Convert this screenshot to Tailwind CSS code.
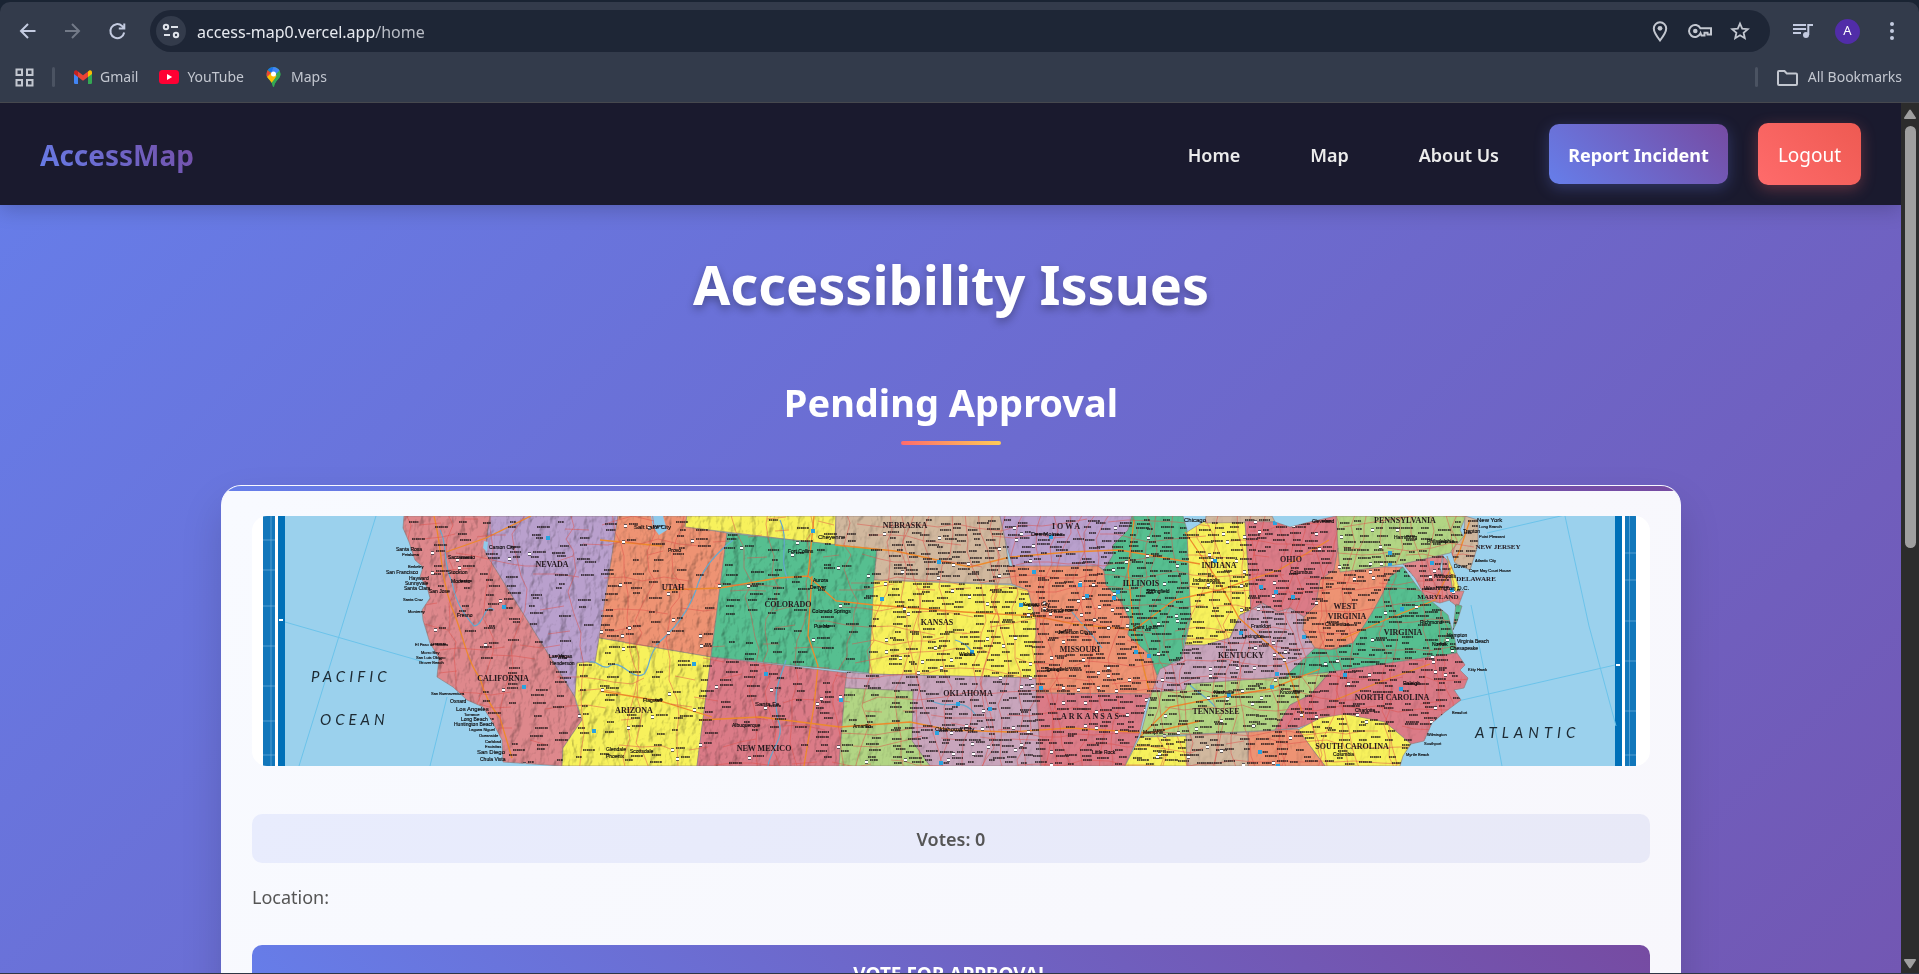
<!DOCTYPE html>
<html lang="en">
<head>
<meta charset="utf-8">
<title>AccessMap</title>
<script src="https://cdn.jsdelivr.net/npm/@tailwindcss/browser@4"></script>
</head>
<body class="flex h-screen flex-col overflow-hidden bg-[#1a2433] font-['Noto_Sans',sans-serif]">

<!-- Browser toolbar -->
<div class="mt-[2px] shrink-0 rounded-t-[10px] border-b border-[#46484e] bg-[#333b4b] text-[#c3c7d0]">
  <div class="flex h-[58px] items-center pl-4 pr-[15px]">
    <button aria-label="Back" class="flex size-6 items-center justify-center text-[#c4cbe0]">
      <svg class="size-6" viewBox="0 0 24 24" fill="none" stroke="currentColor" stroke-width="2"><path d="M19.5 12H6M12 5l-7 7 7 7"/></svg>
    </button>
    <button aria-label="Forward" class="ml-5 flex size-6 items-center justify-center text-[#737a88]">
      <svg class="size-6" viewBox="0 0 24 24" fill="none" stroke="currentColor" stroke-width="2"><path d="M5 12h14M12 5l7 7-7 7"/></svg>
    </button>
    <button aria-label="Reload" class="ml-[21px] flex size-6 items-center justify-center text-[#c4cbe0]">
      <svg class="size-6" viewBox="0 0 24 24" fill="none" stroke="currentColor" stroke-width="2"><path d="M19.200 13.500a7 7 0 1 1-2.200-6.600L19 9M19.300 4.500v5h-5.500"/></svg>
    </button>
    <div class="ml-[21px] flex h-[42px] flex-1 items-center rounded-full bg-[#1e2636] pl-[6px] pr-5">
      <button aria-label="Site information" class="flex size-[30px] items-center justify-center rounded-full bg-[#333b4b] text-[#dfe3ea]">
        <svg class="size-[18px]" viewBox="0 0 18 18" fill="none" stroke="currentColor" stroke-width="2"><circle cx="4" cy="5" r="2.200"/><path d="M9 5h7M2 13h6"/><circle cx="14" cy="13" r="2.200"/></svg>
      </button>
      <a href="#" class="ml-[11px] flex-1 pt-[2px] text-[16px] leading-6 text-[#b9bdc6]"><span class="text-[#e6e9ef]">access-map0.vercel.app</span>/home</a>
      <button aria-label="Location" class="flex w-5 justify-center">
        <svg class="h-[22px] w-5" viewBox="0 0 20 22" fill="none" stroke="currentColor" stroke-width="2"><path d="M10 20.500C6.500 16 3.800 12 3.800 8.500a6.200 6.200 0 0 1 12.400 0c0 3.500-2.700 7.500-6.200 12z"/><circle cx="10" cy="8.300" r="2.400" fill="currentColor" stroke="none"/></svg>
      </button>
      <button aria-label="Passwords" class="ml-[18px] flex">
        <svg class="h-[18px] w-6" viewBox="0 0 24 18" fill="none" stroke="currentColor" stroke-width="2"><path d="M12.400 6.300H23v6.200h-3.500V10.700h-3v2.800h-3l-.9-2.300a6 6 0 1 1-.2-4.900z"/><circle cx="7.300" cy="9" r="2.300" fill="currentColor" stroke="none"/></svg>
      </button>
      <button aria-label="Bookmark this tab" class="ml-[18px] flex">
        <svg class="size-5" viewBox="0 0 20 20" fill="none" stroke="currentColor" stroke-width="1.800"><path d="M10 2.500l2.200 5.100 5.600.5-4.200 3.700 1.200 5.400-4.800-2.900-4.800 2.900 1.200-5.400-4.200-3.700 5.600-.5z"/></svg>
      </button>
    </div>
    <button aria-label="Media controls" class="ml-[22px] flex text-[#c4cbe0]">
      <svg class="size-[22px]" viewBox="0 0 22 22" fill="none" stroke="currentColor" stroke-width="2"><path d="M1 5h13M1 9h13M1 13h8M21 5h-4.700v10"/><circle cx="14" cy="15" r="3" fill="currentColor" stroke="none"/></svg>
    </button>
    <button class="ml-[21px] flex size-[25px] items-center justify-center rounded-full bg-[#512da8] text-[13px] text-white">A</button>
    <button aria-label="Menu" class="ml-[20px] flex text-[#c4cbe0]">
      <svg class="size-6" viewBox="0 0 24 24" fill="currentColor"><circle cx="12" cy="5" r="2"/><circle cx="12" cy="12" r="2"/><circle cx="12" cy="19" r="2"/></svg>
    </button>
  </div>
  <div class="flex h-[42px] items-start pl-[15px] pr-[17px] text-[14px] leading-[34px]">
    <button aria-label="Apps" class="mt-2 flex">
      <svg class="size-[19px]" viewBox="0 0 19 19" fill="none" stroke="currentColor" stroke-width="2"><path d="M1.500 1.500h5.500v5.500H1.500zM12 1.500h5.500v5.500H12zM1.500 12h5.500v5.500H1.500zM12 12h5.500v5.500H12z"/></svg>
    </button>
    <span class="ml-[18px] mt-[7px] h-5 w-[3px] rounded bg-[#4b5362]"></span>
    <a href="#" class="ml-[19px] flex gap-2">
      <svg class="mt-[10px] h-[14px] w-[18px]" viewBox="0 0 18 14"><path fill="#4285f4" d="M0 3l4 3v8H1.200A1.200 1.200 0 0 1 0 12.800z"/><path fill="#34a853" d="M14 6l4-3v9.800a1.200 1.200 0 0 1-1.200 1.200H14z"/><path fill="#fbbc04" d="M14 1.500l1-.8c1.300-1 3 0 3 1.500V4l-4 3z"/><path fill="#c5221f" d="M0 2.200C0 .7 1.700-.3 3 .7l1 .8V7L0 4z"/><path fill="#ea4335" d="M4 1.500l5 3.800 5-3.800V7l-5 3.700L4 7z"/></svg>Gmail</a>
    <a href="#" class="ml-[21px] flex gap-2">
      <svg class="mt-[10px] h-[14px] w-5" viewBox="0 0 20 14"><rect width="20" height="14" rx="3.500" fill="#ff0033"/><path fill="#fff" d="M8 4l5.200 3L8 10z"/></svg>YouTube</a>
    <a href="#" class="ml-[22px] flex gap-[10px]">
      <svg class="mt-[7px] h-5 w-[15px]" viewBox="0 0 15 20"><defs><clipPath id="pin"><path d="M7.500 0A7 7 0 0 0 .5 7c0 3 1.700 4.500 3.500 6.600C5.800 15.700 6.300 17 6.700 19c.2 1.200 1.400 1.200 1.600 0 .4-2 .9-3.300 2.700-5.400C12.800 11.500 14.500 10 14.500 7a7 7 0 0 0-7-7z"/></clipPath></defs><g clip-path="url(#pin)"><path fill="#34a853" d="M0 0h15v20H0z"/><path fill="#fbbc04" d="M0 9l5-4 6 4-8 10-4-5z"/><path fill="#ea4335" d="M0 2l5 4-5 5z"/><path fill="#1a73e8" d="M1 1l8-2-3.500 7L2 3z"/><path fill="#4285f4" d="M8-1l6 4-6 6-3-3z"/><path fill="#34a853" d="M14 3l1 5-8 12-1-3z"/></g><circle cx="7.500" cy="7" r="2.500" fill="#fff"/></svg>Maps</a>
    <span class="ml-auto mt-[7px] h-5 w-[3px] rounded bg-[#4b5362]"></span>
    <button class="ml-[19px] flex gap-[10px]">
      <svg class="mt-[10px] h-4 w-[21px]" viewBox="0 0 21 16" fill="none" stroke="currentColor" stroke-width="2"><path d="M1 2a1 1 0 0 1 1-1h5.500l2.300 2.500H19a1 1 0 0 1 1 1V14a1 1 0 0 1-1 1H2a1 1 0 0 1-1-1z"/></svg>All Bookmarks</button>
  </div>
</div>

<div class="flex min-h-0 flex-1 border-b border-[#2e3644]">
  <div class="min-w-0 flex-1 overflow-hidden">
    <div class="flex min-h-[198%] flex-col bg-[linear-gradient(135deg,#667eea_0%,#764ba2_100%)]">

      <header class="relative flex h-[102px] shrink-0 items-center justify-between bg-[#1a1a2e] px-10 shadow-[0_4px_20px_rgba(0,0,0,0.2)]">
        <a href="#" class="bg-[linear-gradient(45deg,#667eea,#764ba2)] bg-clip-text pt-[2px] text-[28px] font-bold text-transparent">AccessMap</a>
        <nav class="flex items-center gap-[30px] text-[18px] font-semibold text-[#ebebeb]">
          <a href="#" class="px-5 pt-[2px]">Home</a>
          <a href="#" class="px-5 pt-[2px]">Map</a>
          <a href="#" class="px-5 pt-[2px]">About Us</a>
          <a href="#" class="flex h-[60px] w-[179px] items-center justify-center whitespace-nowrap rounded-[10px] bg-[linear-gradient(45deg,#667eea,#764ba2)] pt-[2px] text-[18px] font-bold text-white shadow-[0_4px_15px_rgba(102,126,234,0.3)]">Report Incident</a>
          <button class="h-[62px] w-[103px] rounded-[10px] bg-[linear-gradient(45deg,#ff6b6b,#ee5a52)] pt-[2px] text-[19px] font-normal text-white shadow-[0_4px_15px_rgba(255,107,107,0.3)]">Logout</button>
        </nav>
      </header>

      <main class="pl-[221px] pr-[220px] pt-[41px]">
        <h1 class="text-center text-[54px] leading-[76px] font-bold text-white [text-shadow:0_4px_8px_rgba(0,0,0,0.3)]">Accessibility Issues</h1>
        <h2 class="mt-[52px] text-center text-[38px] leading-[56px] font-bold text-white">Pending Approval</h2>
        <div class="mx-auto mt-[11px] h-1 w-[100px] rounded-sm bg-[linear-gradient(90deg,#ff6b6b,#feca57)]"></div>

        <article class="mt-10 overflow-hidden rounded-[20px] border border-[#f8f9ff] bg-[linear-gradient(135deg,#f8faff,#f8f7fc)] shadow-[0_20px_40px_rgba(0,0,0,0.15)]">
          <div class="h-[5px] bg-[linear-gradient(90deg,#667eea,#764ba2)]"></div>
          <div class="px-[30px] pb-[30px] pt-[25px]">
            <svg id="map" role="img" aria-label="Map of the United States" class="h-[250px] w-full rounded-[15px] bg-white" viewBox="252 516 1398 250" preserveAspectRatio="xMidYMid slice">
              <defs>
                <clipPath id="land"></clipPath>
                <filter id="relief" x="0" y="0" width="1" height="1" color-interpolation-filters="sRGB">
                  <feTurbulence type="fractalNoise" baseFrequency="0.11 0.07" numOctaves="4" seed="4"/>
                  <feDiffuseLighting surfaceScale="2" diffuseConstant="1.150" lighting-color="#fff"><feDistantLight azimuth="215" elevation="60"/></feDiffuseLighting>
                </filter>
                <linearGradient id="fade"><stop offset="0" stop-color="#fff"/><stop offset=".37" stop-color="#fff"/><stop offset=".5" stop-color="#555"/><stop offset="1" stop-color="#555"/></linearGradient>
                <mask id="west" maskUnits="userSpaceOnUse" x="400" y="516" width="1090" height="250"><rect x="400" y="516" width="1090" height="250" fill="url(#fade)"/></mask>
              </defs>
              <path fill="#1277bb" d="M263 516h12v250h-12zM1625 516h11v250h-11z"/>
              <path stroke="#7fb9e0" stroke-width=".6" fill="none" d="M271 516v250M1629.500 516v250M263 540h12m-12 30h12m-12 36h12m-12 40h12m-12 40h12m-12 35h12m-12 34h12M1625 553h11m-11 27h11m-11 41h11m-11 40h11m-11 50h11m-11 44h11"/>
              <path fill="#0070b8" d="M278 516h7v250h-7zM1615 516h7v250h-7z"/>
              <path fill="#9bd1ed" d="M285 516h1330v250H285z"/>
              <path stroke="#6cc3ea" stroke-width="1" fill="none" d="M376 516L299 766M285 622L424 662M447 697L430 766M1565 516l24 110 27 100M1487 533l78-18M1471 605l16 80 15 81M1458 701l157-36"/>
              <path fill="#fff" d="M279 619h4v2h-4zM1616 664h4v2h-4z"/>
              <g id="states"></g>
              <g clip-path="url(#land)" class="opacity-75 mix-blend-multiply">
                <g mask="url(#west)"><rect x="400" y="516" width="1090" height="250" filter="url(#relief)"/></g>
              </g>
              <g clip-path="url(#land)">
                <g fill="none" stroke="#64a9cf" stroke-width="1.200"><path d="M733 540c-18 14-32 30-37 50-8 22-22 40-40 55M656 647c-8 10-6 20-12 27-12 8-24-18-36-7-8 2-12-8-18-5M780 520c10 20-2 40 8 60M786 660c-6 20-14 30-8 60 8 18-8 30-10 46M930 700c20 12 30-5 45 14M1072 612c12 15 22 24 30 36M1190 685c10 10 20 14 25 22M955 640c14 4 12 8 18 12M440 530c8 14 2 32 12 52 4 22 12 32 22 44 10 0 10-24 20-16"/></g>
                <path fill="#8fc9ea" d="M651 516h12l4 14-8 5-6-8zM484 541l4 1-1 10-4-4z"/>
                <g fill="none" stroke="#ed8a2c" stroke-width="1.300"><path d="M434 516c8 30 6 60 18 92 10 22 14 52 28 70 4 16 10 28 20 40l12 40M446 552l40-14 45-22M600 691l60 10 52 16M720 588l58-10 30-2 28 25 38 4 90 7 70 4M808 576l6-60M812 576l-4 60 10 30-4 40-10 60M600 540l62 6M665 590l55-2M700 720l60-3 80 10 70-5 40 8 60 2 60-4 80 5 50-12M835 545l60 6 75 16 40-10 60-5 50-2 80 14M1024 614l50 10 60 6 40-30 45-10 60-20 50-30M1219 582l-34-50M1219 582l20 36 45 40 20 60M1140 737l30-30 40-8 60-10 50-20M1134 520l-6 50 6 60 15 60M1335 700l50-20 45-16M1340 640l45-20 50-20 25-50 10-30"/></g>
                <g id="roads" fill="none"></g>
                <g id="marks"></g>
              </g>
              <g id="cities" class="font-['Liberation_Sans',sans-serif]" fill="#0c0a0b" stroke="#0c0a0b" stroke-width=".15"></g>
              <g id="names" class="font-['Liberation_Serif',serif] font-bold" fill="#24181d" text-anchor="middle"></g>
              <g class="font-['Lato',sans-serif] text-[15px] italic" fill="#1d2a33">
                <text x="311" y="682" class="tracking-[4px]">PACIFIC</text><text x="320" y="725" class="tracking-[4px]">OCEAN</text><text x="1475" y="738" class="tracking-[5px]">ATLANTIC</text>
              </g>
            </svg>
            <p class="mt-12 flex h-[49px] items-center justify-center rounded-[10px] bg-[linear-gradient(135deg,#e8ecfd,#e8e9f7)] pt-[2px] text-[18px] font-semibold text-[#555]">Votes: 0</p>
            <p class="mt-5 text-[18px] leading-7 text-[#555]">Location:</p>
            <button class="mt-[34px] h-[58px] w-full rounded-[10px] bg-[linear-gradient(45deg,#667eea,#764ba2)] text-[19px] font-bold text-white uppercase">Vote for Approval</button>
          </div>
        </article>
      </main>
    </div>
  </div>

  <!-- Scrollbar -->
  <div class="flex w-[18px] shrink-0 flex-col items-center bg-[#2c2c2c] pt-[6px] pb-1">
    <svg class="h-[11px] w-3" viewBox="0 0 12 11" fill="#9f9f9f"><path d="M5 1.300a1.200 1.200 0 0 1 2 0l4.800 7.200a1 1 0 0 1-.8 1.500H1a1 1 0 0 1-.8-1.500z"/></svg>
    <div class="mt-[6px] mb-1 flex w-full flex-1 justify-center"><div class="h-[51%] w-[11px] rounded-full bg-[#9f9f9f]"></div></div>
    <svg class="h-[11px] w-3" viewBox="0 0 12 11" fill="#9f9f9f"><path d="M5 9.700a1.200 1.200 0 0 0 2 0l4.800-7.200A1 1 0 0 0 11 1H1a1 1 0 0 0-.8 1.500z"/></svg>
  </div>
</div>

<script>
const NS = 'http://www.w3.org/2000/svg';
const $ = id => document.getElementById(id);
const add = (parent, tag, attrs, text) => {
  const el = document.createElementNS(NS, tag);
  for (const k in attrs) el.setAttribute(k, attrs[k]);
  if (text) el.textContent = text;
  parent.appendChild(el);
  return el;
};
const red = '#de888c', rose = '#db7b87', violet = '#b9a0cd', orange = '#ee9373', yellow = '#f7f15c',
      green = '#56bf90', tan = '#d1b89e', mauve = '#c8a5bc', lime = '#b2d584';
const states = [
  [lime, '1336,516 1466,516 1460,530 1465,540 1450,553 1403,564 1338,573'],
  [tan, '1465,516 1478,520 1478,545 1470,570 1455,563 1451,551 1464,536'],
  [red, '404,516 403,528 409,542 415,560 423,567 420,577 427,587 430,598 422,610 423,620 430,643 439,658 437,677 453,687 467,700 483,707 493,723 502,740 503,762 562,766 563,748 573,733 582,720 576,703 575,697 485,552 490,516'],
  [violet, '490,516 485,552 575,697 577,663 587,662 595,663 600,638 618,516'],
  [orange, '618,516 599,638 711,657 727,533 685,526 687,516'],
  [yellow, '687,516 685,527 835,545 836,516'],
  [green, '727,533 877,549 869,673 711,657'],
  [yellow, '599,638 595,663 587,662 577,663 575,697 582,720 573,733 563,748 562,766 697,766 711,657'],
  [rose, '711,657 847,673 845,688 839,766 697,766'],
  [tan, '836,516 1000,516 1005,540 1008,560 1013,584 874,580 877,549 835,545'],
  [yellow, '874,580 1010,585 1028,590 1033,610 1036,620 1036,678 869,674'],
  [mauve, '847,672 869,674 1036,678 1038,695 1041,766 930,766 912,741 913,691 845,688'],
  [lime, '845,688 913,691 912,741 930,766 839,766'],
  [violet, '1000,516 1132,516 1128,530 1113,545 1113,555 1104,570 1098,566 1013,567 1007,547'],
  [orange, '1007,566 1098,566 1104,571 1106,585 1120,600 1130,620 1128,635 1150,655 1157,675 1158,690 1152,700 1146,694 1036,693 1036,620 1028,590 1012,584'],
  [rose, '1036,693 1150,694 1146,705 1139,735 1125,766 1041,766'],
  [green, '1132,516 1183,516 1187,530 1190,600 1191,617 1185,640 1181,660 1173,662 1157,675 1150,655 1128,635 1130,620 1120,600 1106,585 1104,570 1113,555 1113,545 1128,530'],
  [yellow, '1187,532 1195,527 1205,521 1245,521 1251,610 1240,615 1230,638 1205,645 1185,645 1191,617 1190,600'],
  [tan, '1206,516 1272,516 1275,522 1205,523'],
  [rose, '1245,521 1275,522 1290,527 1310,522 1336,516 1338,548 1334,570 1320,580 1316,605 1304,617 1290,608 1278,612 1262,603 1251,610'],
  [mauve, '1181,660 1185,645 1205,645 1230,638 1240,615 1251,610 1262,603 1278,612 1290,608 1304,617 1303,630 1315,648 1285,677 1187,684 1185,690 1152,692 1160,669'],
  [lime, '1152,692 1185,690 1187,684 1285,677 1330,672 1310,695 1290,705 1275,730 1140,737'],
  [orange, '1338,548 1340,572 1383,567 1403,567 1390,577 1383,593 1372,613 1353,643 1330,650 1315,648 1303,630 1304,617 1316,605 1320,580 1334,570'],
  [green, '1403,567 1420,590 1430,600 1448,615 1455,640 1457,653 1330,672 1285,677 1315,648 1330,650 1353,643 1372,613 1383,593 1390,577'],
  [red, '1403,564 1443,555 1440,568 1446,588 1450,600 1440,603 1427,600 1415,578'],
  [red, '1443,556 1447,560 1453,591 1464,591 1458,607 1450,601 1442,580'],
  [yellow, '1447,556 1455,575 1460,591 1453,591'],
  [green, '1456,604 1462,606 1457,622 1453,630'],
  [rose, '1330,672 1457,653 1465,665 1460,670 1468,678 1464,688 1454,690 1461,700 1445,712 1432,723 1424,741 1411,744 1385,722 1345,716 1320,720 1298,728 1275,730 1290,705 1310,695'],
  [yellow, '1320,718 1345,714 1385,722 1411,744 1403,756 1400,766 1325,766 1313,750 1298,730'],
  [orange, '1248,732 1298,729 1313,750 1325,766 1248,766'],
  [tan, '1186,735 1248,732 1248,766 1187,766'],
  [yellow, '1140,737 1186,736 1187,766 1125,766']
];
for (const [fill, points] of states) {
  add($('states'), 'polygon', { points, fill, stroke: '#8c7a78', 'stroke-width': 0.6 });
  add($('land'), 'polygon', { points });
}

// Seeded generator keeps the road network stable between loads.
let seed = 7;
const rnd = () => (seed = (seed * 16807) % 2147483647) / 2147483647;
let minor = '';
for (let x = 405; x < 1480; x += x < 880 ? 40 : 15) {
  let px = x + rnd() * 8, py = 512;
  minor += `M${px | 0} ${py}`;
  while (py < 770) { px += (rnd() - 0.5) * 16; py += 10 + rnd() * 12; minor += `L${px | 0} ${py | 0}`; }
}
for (let y = 524; y < 770; y += 17) {
  let px = 400, py = y;
  minor += `M${px} ${py}`;
  while (px < 1480) { px += 12 + rnd() * 14; py += (rnd() - 0.5) * 12; py += (y - py) * 0.2; minor += rnd() < (px < 870 ? 0.6 : 0.15) ? `M${px | 0} ${py | 0}` : `L${px | 0} ${py | 0}`; }
}
add($('roads'), 'path', { d: minor, stroke: '#de4f4a', 'stroke-width': 0.7, opacity: 0.7 });

const names = [
  ['NEVADA', 552, 567, 8], ['UTAH', 673, 590, 8], ['CALIFORNIA', 503, 681, 8], ['ARIZONA', 634, 713, 8],
  ['COLORADO', 788, 607, 8], ['NEW MEXICO', 764, 751, 8], ['NEBRASKA', 905, 528, 8], ['KANSAS', 937, 625, 8],
  ['OKLAHOMA', 968, 696, 8], ['IOWA', 1067, 529, 8], ['MISSOURI', 1080, 652, 8], ['ILLINOIS', 1141, 586, 8],
  ['INDIANA', 1219, 568, 8], ['OHIO', 1291, 562, 8], ['KENTUCKY', 1241, 658, 8], ['TENNESSEE', 1216, 714, 8],
  ['ARKANSAS', 1091, 719, 8], ['WEST', 1345, 609, 8], ['VIRGINIA', 1347, 619, 8], ['VIRGINIA', 1403, 635, 8],
  ['PENNSYLVANIA', 1405, 523, 8], ['MARYLAND', 1438, 599, 7], ['NEW JERSEY', 1498, 549, 7], ['DELAWARE', 1476, 581, 7],
  ['NORTH CAROLINA', 1392, 700, 8], ['SOUTH CAROLINA', 1352, 749, 8]
];
for (const [t, x, y, s] of names) {
  const el = add($('names'), 'text', { x, y, 'font-size': s }, t);
  if (t === 'ARKANSAS' || t === 'IOWA') el.setAttribute('class', 'tracking-[2px]');
}

// Town marks keep clear of the state names.
const nearName = (x, y) => names.some(n => Math.abs(y - n[2] + 3) < 5 && x > n[1] - n[0].length * 3 - 14 && x < n[1] + n[0].length * 3 + 2);
let towns = '', shields = '', blue = '';
for (let y = 520; y < 766; y += 6) {
  for (let x = 408; x < 1480; x += x < 880 ? 24 : 16) {
    if (rnd() < (x < 880 ? 0.55 : 0.1)) continue;
    const tx = (x + rnd() * 10) | 0, ty = (y + rnd() * 5) | 0;
    if (nearName(tx, ty)) continue;
    towns += `M${tx} ${ty}h${(6 + rnd() * 8) | 0}`;
    if (rnd() < 0.14) shields += `M${tx - 5} ${ty + 2}h3`;
    if (rnd() < 0.02) blue += `M${tx + 14} ${ty + 3}h4`;
  }
}
add($('marks'), 'path', { d: towns, stroke: '#1c1416', 'stroke-width': 2, 'stroke-dasharray': '1.6 .5 1 .6 2 .4', opacity: 0.75 });
add($('marks'), 'path', { d: shields, stroke: '#3d3d46', 'stroke-width': 3.6 });
add($('marks'), 'path', { d: shields, stroke: '#fff', 'stroke-width': 2.2 });
add($('marks'), 'path', { d: blue, stroke: '#29a3e0', 'stroke-width': 4 });

const cities = [
  ['San Francisco', 386, 574, 5], ['Santa Rosa', 396, 551, 5], ['Sacramento', 448, 559, 5], ['Petaluma', 402, 556, 4],
  ['Berkeley', 408, 568, 4], ['Hayward', 409, 580, 5], ['Sunnyvale', 405, 585, 5], ['Santa Clara', 404, 590, 5], ['Santa Cruz', 403, 601, 4],
  ['San Jose', 429, 593, 5], ['Monterey', 408, 613, 4], ['Fresno', 457, 617, 5], ['Stockton', 448, 574, 5], ['Modesto', 451, 583, 5],
  ['El Paso de Robles', 415, 646, 4], ['Morro Bay', 421, 654, 4], ['San Luis Obispo', 416, 659, 4], ['Grover Beach', 419, 664, 4],
  ['San Buenaventura', 431, 695, 4], ['Oxnard', 450, 703, 5], ['Los Angeles', 456, 711, 6], ['Torrance', 464, 716, 4],
  ['Long Beach', 461, 721, 5], ['Huntington Beach', 454, 726, 5], ['Laguna Niguel', 469, 731, 4], ['Oceanside', 479, 737, 4],
  ['Carlsbad', 485, 743, 4], ['Encinitas', 485, 748, 4], ['San Diego', 477, 754, 6], ['Chula Vista', 480, 761, 5],
  ['Carson City', 489, 549, 5], ['Las Vegas', 549, 658, 5], ['Henderson', 550, 665, 5], ['Salt Lake City', 634, 529, 6], ['Provo', 668, 552, 5],
  ['Flagstaff', 643, 702, 5], ['Phoenix', 606, 758, 5], ['Scottsdale', 630, 753, 5], ['Glendale', 606, 751, 5],
  ['Denver', 810, 589, 5], ['Aurora', 813, 582, 5], ['Fort Collins', 788, 553, 5], ['Colorado Springs', 812, 613, 5], ['Pueblo', 814, 628, 5],
  ['Cheyenne', 818, 539, 6], ['Santa Fe', 755, 706, 6], ['Albuquerque', 732, 727, 5], ['Amarillo', 853, 728, 5], ['Oklahoma City', 935, 731, 6],
  ['Wichita', 959, 656, 5], ['Des Moines', 1031, 536, 6], ['Kansas City', 1023, 606, 5], ['Independence', 1041, 612, 5], ['Jefferson City', 1058, 634, 5],
  ['Saint Louis', 1133, 629, 5], ['Springfield', 1045, 671, 5], ['Springfield', 1146, 593, 5], ['Chicago', 1184, 522, 6], ['Indianapolis', 1193, 582, 5],
  ['Columbus', 1290, 574, 5], ['Cleveland', 1312, 523, 5], ['Frankfort', 1251, 628, 5], ['Lexington', 1242, 638, 5], ['Nashville', 1214, 694, 5],
  ['Knoxville', 1280, 694, 5], ['Memphis', 1143, 734, 5], ['Little Rock', 1092, 754, 5], ['Charleston', 1325, 626, 5], ['Richmond', 1420, 624, 5],
  ['Washington D.C.', 1424, 590, 6], ['Annapolis', 1434, 578, 5], ['Dover', 1454, 568, 5], ['Philadelphia', 1427, 543, 5], ['Harrisburg', 1394, 539, 5],
  ['Trenton', 1463, 533, 5], ['New York', 1477, 522, 6], ['Long Branch', 1479, 528, 4], ['Point Pleasant', 1479, 538, 4], ['Atlantic City', 1475, 562, 4],
  ['Cape May Court House', 1469, 572, 4], ['Virginia Beach', 1457, 643, 5], ['Chesapeake', 1450, 650, 5], ['Hampton', 1447, 637, 5], ['Norfolk', 1432, 646, 5], ['Raleigh', 1403, 685, 5],
  ['Charlotte', 1355, 712, 5], ['Columbia', 1333, 756, 5], ['Wilmington', 1427, 736, 4], ['Southport', 1424, 745, 4], ['Myrtle Beach', 1406, 756, 4],
  ['Beaufort', 1452, 714, 4], ['Kitty Hawk', 1468, 671, 4]
];
for (const [t, x, y, s] of cities) add($('cities'), 'text', { x, y, 'font-size': s }, t);
</script>
</body>
</html>
